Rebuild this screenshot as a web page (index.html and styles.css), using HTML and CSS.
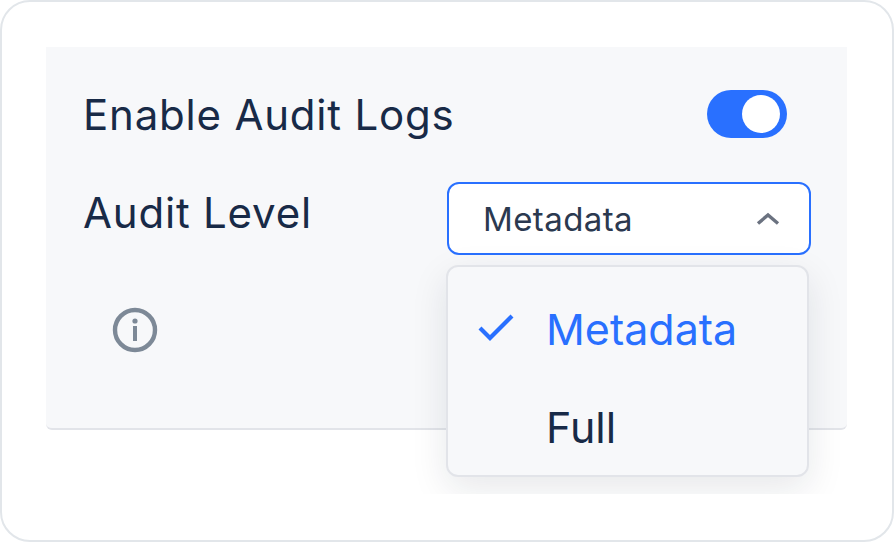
FILE: index.html
```html
<!DOCTYPE html>
<html lang="en">
<head>
    <title>Audit Settings</title>
    <link rel="stylesheet" href="styles.css">
</head>
<body>
<div class="frame">
    <div class="panel">
        <div class="row row-toggle">
            <span class="label">Enable Audit Logs</span>
            <span class="toggle"><span class="toggle-knob"></span></span>
        </div>
        <div class="row row-select">
            <span class="label label-level">Audit Level</span>
            <div class="select">
                <span>Metadata</span>
                <svg class="chevron" width="24" height="14" viewBox="0 0 24 14" fill="none">
                    <path d="M2 11.5L12 3l10 8.5" stroke="#6b7280" stroke-width="3.4"/>
                </svg>
                <!-- open menu -->
                <div class="menu">
                    <div class="option selected">
                        <svg class="check" width="36" height="28" viewBox="0 0 36 28" fill="none">
                            <path d="M2 15l10 10L34 3" stroke="#2970ff" stroke-width="4.2"/>
                        </svg>
                        <span>Metadata</span>
                    </div>
                    <div class="option"><span>Full</span></div>
                </div>
            </div>
        </div>
        <svg class="info" width="46" height="46" viewBox="0 0 46 46" fill="none">
            <circle cx="23" cy="23" r="20" stroke="#7d8997" stroke-width="4.4"/>
            <circle cx="23" cy="14" r="2.6" fill="#7d8997"/>
            <rect x="21" y="19" width="4" height="15" fill="#7d8997"/>
        </svg>
    </div>
</div>
</body>
</html>
```

FILE: styles.css
```css
html, body {
    margin: 0;
    height: 100%;
    background-color: white;
}

body {
    font-family: Inter, sans-serif;
    color: #182a47;
}

.frame {
    box-sizing: border-box;
    height: 542px;
    width: 894px;
    padding: 45px 45px 0 44px;
    border: 2px solid #e2e6ea;
    border-radius: 30px;
}

.panel {
    box-sizing: border-box;
    height: 383px;
    padding: 43px 37px 0 37px;
    background-color: #f7f8fa;
    border-bottom: 2px solid #e2e4e9;
    border-radius: 0 0 6px 6px;
}

.row {
    display: flex;
    justify-content: space-between;
}

.row-toggle {
    align-items: center;
    height: 48px;
    padding-right: 23px;
}

.row-select {
    margin-top: 44px;
}

.label {
    font-size: 42px;
    font-weight: 430;
    line-height: 48px;
    letter-spacing: 0.8px;
    position: relative;
    top: 1px;
}

.label-level {
    top: 7px;
}

.toggle {
    display: flex;
    justify-content: flex-end;
    align-items: center;
    box-sizing: border-box;
    width: 80px;
    height: 48px;
    padding-right: 7px;
    background-color: #2970ff;
    border-radius: 24px;
}

.toggle-knob {
    width: 38px;
    height: 38px;
    background-color: white;
    border-radius: 50%;
}

.select {
    position: relative;
    display: flex;
    justify-content: space-between;
    align-items: center;
    box-sizing: border-box;
    width: 364px;
    height: 73px;
    margin-right: -1px;
    padding: 0 29px 0 34px;
    font-size: 33px;
    letter-spacing: 0.4px;
    color: #2b3950;
    background-color: white;
    border: 2px solid #2970ff;
    border-radius: 12px;
}

.menu {
    position: absolute;
    top: 81px;
    left: -3px;
    box-sizing: border-box;
    width: 363px;
    height: 212px;
    padding-top: 13px;
    font-size: 43px;
    letter-spacing: 0;
    color: #182a47;
    background-color: #f7f8fa;
    border: 2px solid #e2e4e9;
    border-radius: 12px;
    box-shadow: 0 12px 36px rgba(20, 30, 50, 0.1);
    clip-path: inset(-40px -37px -17px -40px);
}

.option {
    display: flex;
    align-items: center;
    height: 98px;
    padding-left: 98px;
    position: relative;
}

.option.selected {
    color: #2970ff;
}

.check {
    position: absolute;
    left: 30px;
    top: 33px;
}

.info {
    display: block;
    margin: 52px 0 0 29px;
}
```
